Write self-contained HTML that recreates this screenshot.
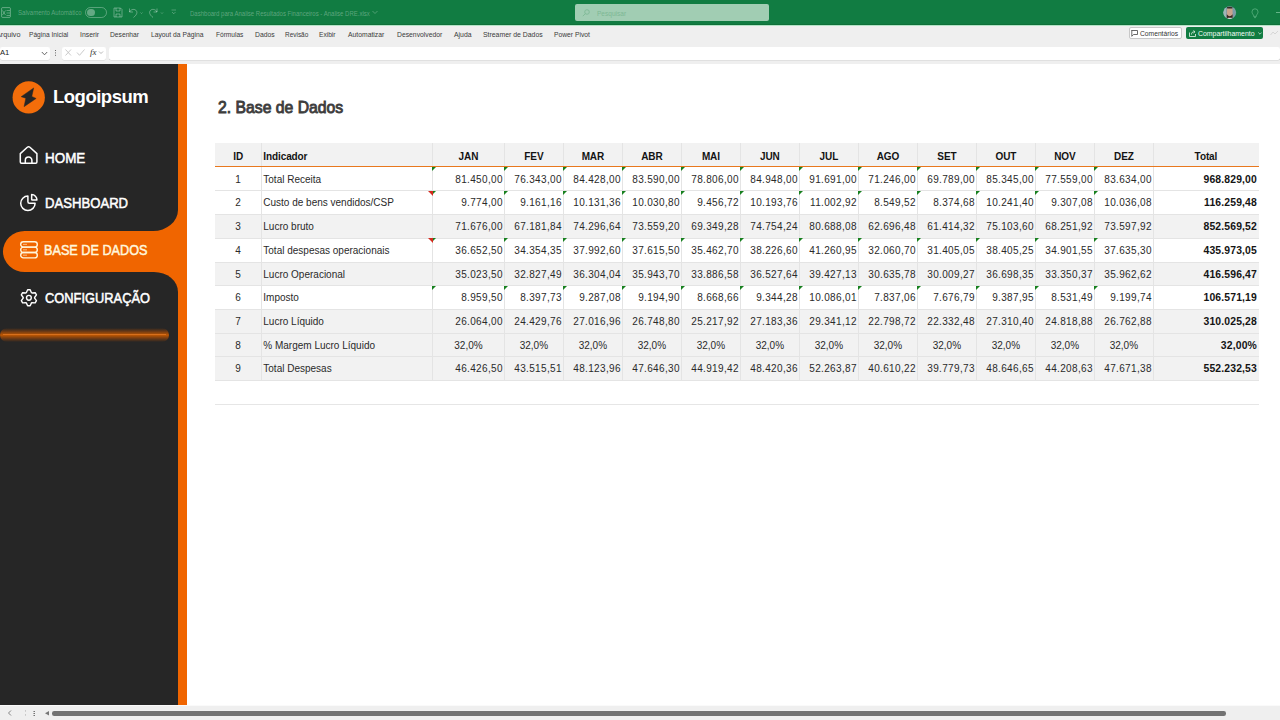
<!DOCTYPE html>
<html><head><meta charset="utf-8">
<style>
*{margin:0;padding:0;box-sizing:border-box}
html,body{width:1280px;height:720px;overflow:hidden;background:#fff;font-family:"Liberation Sans",sans-serif}
.abs{position:absolute}
#title{position:absolute;left:0;top:0;width:1280px;height:25px;background:#117c42}
#ribbon{position:absolute;left:0;top:25px;width:1280px;height:39px;background:#efefef}
.tab{position:absolute;top:29px;font-size:7.6px;color:#333;white-space:nowrap;letter-spacing:-0.1px}
.fbox{position:absolute;top:46.5px;height:13px;background:#fff;border-radius:2px;box-shadow:0 0.5px 0.5px rgba(0,0,0,0.12)}
.fade{position:absolute;color:rgba(255,255,255,0.33);white-space:nowrap}
#side{position:absolute;left:0;top:64px;width:178.3px;height:641px;background:#262626}
#stripe{position:absolute;left:178.3px;top:64px;width:8.7px;height:641px;background:#f06500}
.nav{position:absolute;left:45px;font-size:13.5px;font-weight:bold;color:#fff;white-space:nowrap;letter-spacing:-0.45px}
#bottom{position:absolute;left:0;top:705px;width:1280px;height:15px;background:#efefef;border-top:1px solid #fafafa}
.hdr{position:absolute;left:215px;width:1043.5px;background:#f2f2f2}
.gr{position:absolute;left:215px;width:1043.5px;background:#f2f2f2}
.hl{position:absolute;left:215px;width:1043.5px;height:1px;background:#e4e4e4}
.vl{position:absolute;width:1px;background:#e4e4e4}
.c,.l,.r{position:absolute;height:23.7px;line-height:25.5px;font-size:10px;color:#2a2a2a;white-space:nowrap}
.c{text-align:center}
.l{text-align:left;padding-left:2px}
.r{text-align:right;padding-right:1.5px;letter-spacing:0.35px}
.r.b{letter-spacing:0.15px;padding-right:1.5px;font-size:10.4px}
.b{font-weight:bold;color:#141414}
.h{line-height:27.6px;letter-spacing:-0.1px}
.gt{position:absolute;width:0;height:0;border-top:4.6px solid #17801f;border-right:4.6px solid transparent}
.rt{position:absolute;width:0;height:0;border-top:5px solid #d42a1e;border-left:5px solid transparent}
</style></head><body>
<div id="title"></div>
<!-- title bar items -->
<svg class="abs" style="left:1px;top:7px" width="10" height="11" viewBox="0 0 10 11">
<rect x="0.6" y="0.6" width="8.8" height="9.8" rx="1" fill="none" stroke="rgba(255,255,255,0.35)" stroke-width="1"/>
<path d="M1.5 3.5 L4.5 8 M4.5 3.5 L1.5 8 M5.5 3.5H9 M5.5 6H9 M5.5 8.5H9" stroke="rgba(255,255,255,0.35)" stroke-width="0.9"/>
</svg>
<div class="abs" style="left:85px;top:7px;width:22px;height:11px;border:1px solid rgba(255,255,255,0.3);border-radius:6px"></div>
<div class="abs" style="left:87px;top:8.5px;width:7.5px;height:7.5px;border-radius:50%;background:rgba(255,255,255,0.35)"></div>
<svg class="abs" style="left:113px;top:7px" width="10" height="11" viewBox="0 0 10 11">
<path d="M1 1H7.5L9 2.5V10H1Z M3 1V4H7V1 M3 10V7H7V10" fill="none" stroke="rgba(255,255,255,0.33)" stroke-width="1"/>
</svg>
<svg class="abs" style="left:128px;top:7px" width="40" height="12" viewBox="0 0 40 12">
<path d="M1.5 1.5V5H5 M1.5 5 C3 2 7 1.5 8.5 4 C9.5 6 8.5 8 5.5 10.5" fill="none" stroke="rgba(255,255,255,0.33)" stroke-width="1"/>
<path d="M12.5 5.5L13.5 6.5L14.5 5.5" fill="none" stroke="rgba(255,255,255,0.33)" stroke-width="0.8"/>
<path d="M29 1.5V5H25.5 M29 5 C27.5 2 23.5 1.5 22 4 C21 6 22 8 25 10.5" fill="none" stroke="rgba(255,255,255,0.33)" stroke-width="1"/>
<path d="M33 5.5L34 6.5L35 5.5" fill="none" stroke="rgba(255,255,255,0.33)" stroke-width="0.8"/>
</svg>
<svg class="abs" style="left:171px;top:9px" width="6" height="6" viewBox="0 0 6 6">
<path d="M0.5 1H5 M1 3L2.75 4.8L4.5 3" fill="none" stroke="rgba(255,255,255,0.33)" stroke-width="0.8"/>
</svg>
<svg class="abs" style="left:372px;top:10px" width="6" height="5" viewBox="0 0 6 5">
<path d="M0.5 1L3 3.5L5.5 1" fill="none" stroke="rgba(255,255,255,0.33)" stroke-width="0.8"/>
</svg>
<div class="abs" style="left:574.5px;top:4px;width:194.5px;height:16.6px;border-radius:2px;background:#a1cdb3"></div>
<svg class="abs" style="left:582px;top:8.5px" width="8" height="8" viewBox="0 0 8 8">
<circle cx="5" cy="3" r="2.3" fill="none" stroke="#7fb996" stroke-width="0.9"/><path d="M3.4 4.6L0.8 7.2" stroke="#7fb996" stroke-width="0.9"/>
</svg>
<!-- avatar -->
<svg class="abs" style="left:1223px;top:6px" width="14" height="14" viewBox="0 0 14 14">
<defs><clipPath id="av"><circle cx="6.7" cy="6.6" r="6.3"/></clipPath></defs>
<g clip-path="url(#av)">
<rect width="14" height="14" fill="#7d9aa6"/>
<rect x="0" y="0" width="3" height="14" fill="#9fb5b8"/>
<rect x="3.8" y="1.5" width="5.8" height="11" rx="2.5" fill="#c9a48c"/>
<rect x="3.8" y="0.6" width="5.8" height="2" rx="1" fill="#2e2a26"/>
<path d="M3.8 8.2 Q6.7 12.5 9.6 8.2 L9.6 12.5 H3.8Z" fill="#3a2620"/>
<rect x="4.8" y="11.8" width="4" height="2.5" fill="#dfe8df"/>
</g>
<circle cx="6.7" cy="6.6" r="6.1" fill="none" stroke="rgba(160,200,190,0.5)" stroke-width="0.5"/>
</svg>
<svg class="abs" style="left:1250.5px;top:7.5px" width="8" height="11" viewBox="0 0 8 11">
<path d="M2.6 7.2 C1.6 6 1 5 1 3.8 A3 3 0 0 1 7 3.8 C7 5 6.4 6 5.4 7.2 V8.4 H2.6 Z M3 9.6H5" fill="none" stroke="rgba(150,220,180,0.55)" stroke-width="0.8"/>
</svg>
<div class="abs" style="left:1276px;top:12.3px;width:4px;height:0.9px;background:rgba(170,225,195,0.55)"></div>

<div id="ribbon"></div>
<div class="abs" style="left:0;top:24px;width:1280px;height:1px;background:#0f7039"></div>
<div class="abs" style="left:0;top:25px;width:1280px;height:1.2px;background:#b3e3c6"></div>
<div class="abs" style="left:109px;top:59.2px;width:1171px;height:0.8px;background:#d6d6d6"></div>
<!-- ribbon tabs -->
<!-- share buttons -->
<div class="abs" style="left:1128.5px;top:27.2px;width:53px;height:12.2px;background:#fff;border:1px solid #c8c8c8;border-radius:2px"></div>
<svg class="abs" style="left:1130.5px;top:29.5px" width="7" height="7" viewBox="0 0 7 7">
<path d="M0.5 0.5H6.5V4.5H2.5L0.8 6.3V0.5Z" fill="none" stroke="#444" stroke-width="0.8"/>
</svg>
<div class="abs" style="left:1186px;top:27.2px;width:77px;height:12.2px;background:#117c42;border-radius:2px"></div>
<svg class="abs" style="left:1189px;top:29.5px" width="7" height="7" viewBox="0 0 7 7">
<path d="M0.5 2.5V6.5H6.5V4 M2.5 4.5C2.5 2.5 3.5 1.8 5.5 1.8 M4.5 0.5L6 1.8L4.5 3.1" fill="none" stroke="#e8f5ec" stroke-width="0.8"/>
</svg>
<svg class="abs" style="left:1257.5px;top:32px" width="4" height="3" viewBox="0 0 4 3">
<path d="M0.3 0.5L2 2.2L3.7 0.5" fill="none" stroke="#e8f5ec" stroke-width="0.7"/>
</svg>
<svg class="abs" style="left:1270px;top:30px" width="10" height="7" viewBox="0 0 10 7">
<path d="M0.5 5L3 2L5 4L8 1" fill="none" stroke="#cfcfcf" stroke-width="0.8"/>
</svg>

<!-- formula bar -->
<div class="fbox" style="left:0;width:50px"></div>
<div class="abs" style="left:0;top:48.2px;font-size:7.6px;color:#222">A1</div>
<svg class="abs" style="left:41px;top:50.5px" width="7" height="5" viewBox="0 0 7 5">
<path d="M0.8 1L3.5 3.8L6.2 1" fill="none" stroke="#555" stroke-width="0.9"/>
</svg>
<div class="abs" style="left:55px;top:49.5px;width:1.3px;height:1.3px;background:#666;box-shadow:0 2.4px 0 #666,0 4.8px 0 #666"></div>
<div class="fbox" style="left:62px;width:44px"></div>
<svg class="abs" style="left:64px;top:48px" width="40" height="10" viewBox="0 0 40 10">
<path d="M1.5 1.5L7 7.5 M7 1.5L1.5 7.5" stroke="#bdbdbd" stroke-width="0.8"/>
<path d="M13 4.5L15.5 7.3L20.5 1.5" fill="none" stroke="#bdbdbd" stroke-width="0.8"/>
<path d="M35 3.5L37 5.5L39 3.5" fill="none" stroke="#999" stroke-width="0.7"/>
</svg>
<div class="abs" style="left:90px;top:46.5px;font-size:9px;font-style:italic;font-family:'Liberation Serif',serif;color:#333">fx</div>
<div class="fbox" style="left:109px;width:1171px"></div>

<!-- sidebar -->
<div id="side"></div>
<div id="stripe"></div>
<div class="abs" style="left:140px;top:200px;width:47px;height:100px;background:#f06500"></div>
<div class="abs" style="left:0;top:64px;width:178.3px;height:166.5px;background:#262626;border-bottom-right-radius:25px 21px"></div>
<div class="abs" style="left:0;top:272px;width:178.3px;height:433px;background:#262626;border-top-right-radius:24px 20px"></div>
<div class="abs" style="left:3px;top:230.5px;width:184px;height:41.5px;background:#f06500;border-radius:22px 0 0 22px / 20.75px 0 0 20.75px"></div>
<div class="abs" style="left:0px;top:327.5px;width:169px;height:14px;border-radius:7px;background:linear-gradient(to bottom,rgba(150,65,10,0) 0%,rgba(160,72,8,0.6) 25%,rgba(200,90,0,0.95) 50%,rgba(160,72,8,0.6) 75%,rgba(150,65,10,0) 100%);filter:blur(0.6px)"></div>
<div class="abs" style="left:3px;top:333.8px;width:163px;height:1.2px;background:#d8701c;filter:blur(0.3px)"></div>

<!-- logo -->
<svg class="abs" style="left:8px;top:76px" width="44" height="42" viewBox="0 0 754 720">
<circle cx="355" cy="367" r="277" fill="#f36d0a"/>
<path d="M440 205 L408 350 L482 385 L275 525 L305 380 L225 355 Z" fill="#262626" stroke="#262626" stroke-width="8" stroke-linejoin="round"/>
</svg>
<div class="abs" style="left:53px;top:85.6px;font-size:18.5px;font-weight:bold;color:#fff;letter-spacing:-0.5px;white-space:nowrap">Logoipsum</div>

<!-- nav icons -->
<svg class="abs" style="left:19px;top:145px" width="20" height="20" viewBox="0 0 20 20">
<path d="M1.3 8.6 L8.3 2.3 Q9.6 1.2 10.9 2.3 L17.9 8.6 V17 Q17.9 18.2 16.7 18.2 H2.5 Q1.3 18.2 1.3 17 Z" fill="none" stroke="#fff" stroke-width="1.5" stroke-linejoin="round"/>
<path d="M6.3 18.2 V15.4 A3.3 3.3 0 0 1 12.9 15.4 V18.2" fill="none" stroke="#fff" stroke-width="1.5"/>
</svg>
<svg class="abs" style="left:19px;top:193px" width="20" height="20" viewBox="0 0 20 20">
<path d="M8.9 3.1 A7.2 7.2 0 1 0 16.1 10.3 H10.4 Q8.9 10.3 8.9 8.8 Z" fill="none" stroke="#fff" stroke-width="1.5" stroke-linejoin="round"/>
<path d="M12.65 1.6 A5.4 5.4 0 0 1 17.95 7.05 H13.4 Q12.65 7.05 12.65 6.3 Z" fill="none" stroke="#fff" stroke-width="1.5" stroke-linejoin="round"/>
</svg>
<svg class="abs" style="left:19px;top:240px" width="20" height="20" viewBox="0 0 20 20">
<g fill="none" stroke="#fff6dc" stroke-width="1.4">
<rect x="1.7" y="1.7" width="16.6" height="5.4" rx="2.7"/>
<rect x="1.7" y="7.1" width="16.6" height="5.4" rx="2.7"/>
<rect x="1.7" y="12.5" width="16.6" height="5.4" rx="2.7"/>
</g>
<g fill="#fff6dc"><rect x="4.5" y="3.8" width="1" height="1.2"/><rect x="6.5" y="3.8" width="1" height="1.2"/><rect x="4.5" y="9.2" width="1" height="1.2"/><rect x="6.5" y="9.2" width="1" height="1.2"/><rect x="4.5" y="14.6" width="1" height="1.2"/><rect x="6.5" y="14.6" width="1" height="1.2"/></g>
</svg>
<svg class="abs" style="left:19px;top:288px" width="20" height="20" viewBox="0 0 20 20">
<path d="M7.31 4.72 L8.63 1.80 L11.17 1.80 L12.49 4.72 L13.00 5.02 L16.19 4.70 L17.46 6.90 L15.59 9.50 L15.59 10.10 L17.46 12.70 L16.19 14.90 L13.00 14.58 L12.49 14.88 L11.17 17.80 L8.63 17.80 L7.31 14.88 L6.80 14.58 L3.61 14.90 L2.34 12.70 L4.21 10.10 L4.21 9.50 L2.34 6.90 L3.61 4.70 L6.80 5.02 Z" fill="none" stroke="#fff" stroke-width="1.4" stroke-linejoin="round"/>
<circle cx="9.9" cy="9.8" r="2.4" fill="none" stroke="#fff" stroke-width="1.4"/>
</svg>


<div class="hdr" style="top:143px;height:23.7px"></div>
<div class="gr" style="top:214.1px;height:23.7px"></div>
<div class="gr" style="top:261.5px;height:23.7px"></div>
<div class="gr" style="top:308.9px;height:23.7px"></div>
<div class="gr" style="top:332.6px;height:23.7px"></div>
<div class="gr" style="top:356.3px;height:23.7px"></div>
<div class="hl" style="top:190.4px"></div>
<div class="hl" style="top:214.1px"></div>
<div class="hl" style="top:237.8px"></div>
<div class="hl" style="top:261.5px"></div>
<div class="hl" style="top:285.2px"></div>
<div class="hl" style="top:308.9px"></div>
<div class="hl" style="top:332.6px"></div>
<div class="hl" style="top:356.3px"></div>
<div class="hl" style="top:380px"></div>
<div class="vl" style="left:261px;top:143px;height:237px"></div>
<div class="vl" style="left:432px;top:143px;height:237px"></div>
<div class="vl" style="left:504px;top:143px;height:237px"></div>
<div class="vl" style="left:563px;top:143px;height:237px"></div>
<div class="vl" style="left:622px;top:143px;height:237px"></div>
<div class="vl" style="left:681px;top:143px;height:237px"></div>
<div class="vl" style="left:740px;top:143px;height:237px"></div>
<div class="vl" style="left:799px;top:143px;height:237px"></div>
<div class="vl" style="left:858px;top:143px;height:237px"></div>
<div class="vl" style="left:917px;top:143px;height:237px"></div>
<div class="vl" style="left:976px;top:143px;height:237px"></div>
<div class="vl" style="left:1035px;top:143px;height:237px"></div>
<div class="vl" style="left:1094px;top:143px;height:237px"></div>
<div class="vl" style="left:1153px;top:143px;height:237px"></div>
<div class="c b h" style="left:215px;width:46.3px;top:143px">ID</div>
<div class="l b h" style="left:261.3px;width:171.2px;top:143px">Indicador</div>
<div class="c b h" style="left:432.5px;width:71.9px;top:143px">JAN</div>
<div class="c b h" style="left:504.4px;width:59px;top:143px">FEV</div>
<div class="c b h" style="left:563.4px;width:59px;top:143px">MAR</div>
<div class="c b h" style="left:622.4px;width:59px;top:143px">ABR</div>
<div class="c b h" style="left:681.4px;width:59px;top:143px">MAI</div>
<div class="c b h" style="left:740.4px;width:59px;top:143px">JUN</div>
<div class="c b h" style="left:799.4px;width:59px;top:143px">JUL</div>
<div class="c b h" style="left:858.4px;width:59px;top:143px">AGO</div>
<div class="c b h" style="left:917.4px;width:59px;top:143px">SET</div>
<div class="c b h" style="left:976.4px;width:59px;top:143px">OUT</div>
<div class="c b h" style="left:1035.4px;width:59px;top:143px">NOV</div>
<div class="c b h" style="left:1094.4px;width:59px;top:143px">DEZ</div>
<div class="c b h" style="left:1153.4px;width:105.1px;top:143px">Total</div>
<div class="c" style="left:215px;width:46.3px;top:166.7px">1</div>
<div class="l" style="left:261.3px;width:171.2px;top:166.7px">Total Receita</div>
<div class="r" style="left:432.5px;width:71.9px;top:166.7px">81.450,00</div>
<div class="r" style="left:504.4px;width:59px;top:166.7px">76.343,00</div>
<div class="r" style="left:563.4px;width:59px;top:166.7px">84.428,00</div>
<div class="r" style="left:622.4px;width:59px;top:166.7px">83.590,00</div>
<div class="r" style="left:681.4px;width:59px;top:166.7px">78.806,00</div>
<div class="r" style="left:740.4px;width:59px;top:166.7px">84.948,00</div>
<div class="r" style="left:799.4px;width:59px;top:166.7px">91.691,00</div>
<div class="r" style="left:858.4px;width:59px;top:166.7px">71.246,00</div>
<div class="r" style="left:917.4px;width:59px;top:166.7px">69.789,00</div>
<div class="r" style="left:976.4px;width:59px;top:166.7px">85.345,00</div>
<div class="r" style="left:1035.4px;width:59px;top:166.7px">77.559,00</div>
<div class="r" style="left:1094.4px;width:59px;top:166.7px">83.634,00</div>
<div class="r b" style="left:1153.4px;width:105.1px;top:166.7px">968.829,00</div>
<div class="gt" style="left:432.2px;top:167.3px"></div>
<div class="gt" style="left:504.1px;top:167.3px"></div>
<div class="gt" style="left:563.1px;top:167.3px"></div>
<div class="gt" style="left:622.1px;top:167.3px"></div>
<div class="gt" style="left:681.1px;top:167.3px"></div>
<div class="gt" style="left:740.1px;top:167.3px"></div>
<div class="gt" style="left:799.1px;top:167.3px"></div>
<div class="gt" style="left:858.1px;top:167.3px"></div>
<div class="gt" style="left:917.1px;top:167.3px"></div>
<div class="gt" style="left:976.1px;top:167.3px"></div>
<div class="gt" style="left:1035.1px;top:167.3px"></div>
<div class="gt" style="left:1094.1px;top:167.3px"></div>
<div class="c" style="left:215px;width:46.3px;top:190.4px">2</div>
<div class="l" style="left:261.3px;width:171.2px;top:190.4px">Custo de bens vendidos/CSP</div>
<div class="r" style="left:432.5px;width:71.9px;top:190.4px">9.774,00</div>
<div class="r" style="left:504.4px;width:59px;top:190.4px">9.161,16</div>
<div class="r" style="left:563.4px;width:59px;top:190.4px">10.131,36</div>
<div class="r" style="left:622.4px;width:59px;top:190.4px">10.030,80</div>
<div class="r" style="left:681.4px;width:59px;top:190.4px">9.456,72</div>
<div class="r" style="left:740.4px;width:59px;top:190.4px">10.193,76</div>
<div class="r" style="left:799.4px;width:59px;top:190.4px">11.002,92</div>
<div class="r" style="left:858.4px;width:59px;top:190.4px">8.549,52</div>
<div class="r" style="left:917.4px;width:59px;top:190.4px">8.374,68</div>
<div class="r" style="left:976.4px;width:59px;top:190.4px">10.241,40</div>
<div class="r" style="left:1035.4px;width:59px;top:190.4px">9.307,08</div>
<div class="r" style="left:1094.4px;width:59px;top:190.4px">10.036,08</div>
<div class="r b" style="left:1153.4px;width:105.1px;top:190.4px">116.259,48</div>
<div class="gt" style="left:432.2px;top:191px"></div>
<div class="gt" style="left:504.1px;top:191px"></div>
<div class="gt" style="left:563.1px;top:191px"></div>
<div class="gt" style="left:622.1px;top:191px"></div>
<div class="gt" style="left:681.1px;top:191px"></div>
<div class="gt" style="left:740.1px;top:191px"></div>
<div class="gt" style="left:799.1px;top:191px"></div>
<div class="gt" style="left:858.1px;top:191px"></div>
<div class="gt" style="left:917.1px;top:191px"></div>
<div class="gt" style="left:976.1px;top:191px"></div>
<div class="gt" style="left:1035.1px;top:191px"></div>
<div class="gt" style="left:1094.1px;top:191px"></div>
<div class="rt" style="left:427.5px;top:190.9px"></div>
<div class="c" style="left:215px;width:46.3px;top:214.1px">3</div>
<div class="l" style="left:261.3px;width:171.2px;top:214.1px">Lucro bruto</div>
<div class="r" style="left:432.5px;width:71.9px;top:214.1px">71.676,00</div>
<div class="r" style="left:504.4px;width:59px;top:214.1px">67.181,84</div>
<div class="r" style="left:563.4px;width:59px;top:214.1px">74.296,64</div>
<div class="r" style="left:622.4px;width:59px;top:214.1px">73.559,20</div>
<div class="r" style="left:681.4px;width:59px;top:214.1px">69.349,28</div>
<div class="r" style="left:740.4px;width:59px;top:214.1px">74.754,24</div>
<div class="r" style="left:799.4px;width:59px;top:214.1px">80.688,08</div>
<div class="r" style="left:858.4px;width:59px;top:214.1px">62.696,48</div>
<div class="r" style="left:917.4px;width:59px;top:214.1px">61.414,32</div>
<div class="r" style="left:976.4px;width:59px;top:214.1px">75.103,60</div>
<div class="r" style="left:1035.4px;width:59px;top:214.1px">68.251,92</div>
<div class="r" style="left:1094.4px;width:59px;top:214.1px">73.597,92</div>
<div class="r b" style="left:1153.4px;width:105.1px;top:214.1px">852.569,52</div>
<div class="c" style="left:215px;width:46.3px;top:237.8px">4</div>
<div class="l" style="left:261.3px;width:171.2px;top:237.8px">Total despesas operacionais</div>
<div class="r" style="left:432.5px;width:71.9px;top:237.8px">36.652,50</div>
<div class="r" style="left:504.4px;width:59px;top:237.8px">34.354,35</div>
<div class="r" style="left:563.4px;width:59px;top:237.8px">37.992,60</div>
<div class="r" style="left:622.4px;width:59px;top:237.8px">37.615,50</div>
<div class="r" style="left:681.4px;width:59px;top:237.8px">35.462,70</div>
<div class="r" style="left:740.4px;width:59px;top:237.8px">38.226,60</div>
<div class="r" style="left:799.4px;width:59px;top:237.8px">41.260,95</div>
<div class="r" style="left:858.4px;width:59px;top:237.8px">32.060,70</div>
<div class="r" style="left:917.4px;width:59px;top:237.8px">31.405,05</div>
<div class="r" style="left:976.4px;width:59px;top:237.8px">38.405,25</div>
<div class="r" style="left:1035.4px;width:59px;top:237.8px">34.901,55</div>
<div class="r" style="left:1094.4px;width:59px;top:237.8px">37.635,30</div>
<div class="r b" style="left:1153.4px;width:105.1px;top:237.8px">435.973,05</div>
<div class="gt" style="left:432.2px;top:238.4px"></div>
<div class="gt" style="left:504.1px;top:238.4px"></div>
<div class="gt" style="left:563.1px;top:238.4px"></div>
<div class="gt" style="left:622.1px;top:238.4px"></div>
<div class="gt" style="left:681.1px;top:238.4px"></div>
<div class="gt" style="left:740.1px;top:238.4px"></div>
<div class="gt" style="left:799.1px;top:238.4px"></div>
<div class="gt" style="left:858.1px;top:238.4px"></div>
<div class="gt" style="left:917.1px;top:238.4px"></div>
<div class="gt" style="left:976.1px;top:238.4px"></div>
<div class="gt" style="left:1035.1px;top:238.4px"></div>
<div class="gt" style="left:1094.1px;top:238.4px"></div>
<div class="rt" style="left:427.5px;top:238.3px"></div>
<div class="c" style="left:215px;width:46.3px;top:261.5px">5</div>
<div class="l" style="left:261.3px;width:171.2px;top:261.5px">Lucro Operacional</div>
<div class="r" style="left:432.5px;width:71.9px;top:261.5px">35.023,50</div>
<div class="r" style="left:504.4px;width:59px;top:261.5px">32.827,49</div>
<div class="r" style="left:563.4px;width:59px;top:261.5px">36.304,04</div>
<div class="r" style="left:622.4px;width:59px;top:261.5px">35.943,70</div>
<div class="r" style="left:681.4px;width:59px;top:261.5px">33.886,58</div>
<div class="r" style="left:740.4px;width:59px;top:261.5px">36.527,64</div>
<div class="r" style="left:799.4px;width:59px;top:261.5px">39.427,13</div>
<div class="r" style="left:858.4px;width:59px;top:261.5px">30.635,78</div>
<div class="r" style="left:917.4px;width:59px;top:261.5px">30.009,27</div>
<div class="r" style="left:976.4px;width:59px;top:261.5px">36.698,35</div>
<div class="r" style="left:1035.4px;width:59px;top:261.5px">33.350,37</div>
<div class="r" style="left:1094.4px;width:59px;top:261.5px">35.962,62</div>
<div class="r b" style="left:1153.4px;width:105.1px;top:261.5px">416.596,47</div>
<div class="c" style="left:215px;width:46.3px;top:285.2px">6</div>
<div class="l" style="left:261.3px;width:171.2px;top:285.2px">Imposto</div>
<div class="r" style="left:432.5px;width:71.9px;top:285.2px">8.959,50</div>
<div class="r" style="left:504.4px;width:59px;top:285.2px">8.397,73</div>
<div class="r" style="left:563.4px;width:59px;top:285.2px">9.287,08</div>
<div class="r" style="left:622.4px;width:59px;top:285.2px">9.194,90</div>
<div class="r" style="left:681.4px;width:59px;top:285.2px">8.668,66</div>
<div class="r" style="left:740.4px;width:59px;top:285.2px">9.344,28</div>
<div class="r" style="left:799.4px;width:59px;top:285.2px">10.086,01</div>
<div class="r" style="left:858.4px;width:59px;top:285.2px">7.837,06</div>
<div class="r" style="left:917.4px;width:59px;top:285.2px">7.676,79</div>
<div class="r" style="left:976.4px;width:59px;top:285.2px">9.387,95</div>
<div class="r" style="left:1035.4px;width:59px;top:285.2px">8.531,49</div>
<div class="r" style="left:1094.4px;width:59px;top:285.2px">9.199,74</div>
<div class="r b" style="left:1153.4px;width:105.1px;top:285.2px">106.571,19</div>
<div class="gt" style="left:432.2px;top:285.8px"></div>
<div class="gt" style="left:504.1px;top:285.8px"></div>
<div class="gt" style="left:563.1px;top:285.8px"></div>
<div class="gt" style="left:622.1px;top:285.8px"></div>
<div class="gt" style="left:681.1px;top:285.8px"></div>
<div class="gt" style="left:740.1px;top:285.8px"></div>
<div class="gt" style="left:799.1px;top:285.8px"></div>
<div class="gt" style="left:858.1px;top:285.8px"></div>
<div class="gt" style="left:917.1px;top:285.8px"></div>
<div class="gt" style="left:976.1px;top:285.8px"></div>
<div class="gt" style="left:1035.1px;top:285.8px"></div>
<div class="gt" style="left:1094.1px;top:285.8px"></div>
<div class="c" style="left:215px;width:46.3px;top:308.9px">7</div>
<div class="l" style="left:261.3px;width:171.2px;top:308.9px">Lucro Líquido</div>
<div class="r" style="left:432.5px;width:71.9px;top:308.9px">26.064,00</div>
<div class="r" style="left:504.4px;width:59px;top:308.9px">24.429,76</div>
<div class="r" style="left:563.4px;width:59px;top:308.9px">27.016,96</div>
<div class="r" style="left:622.4px;width:59px;top:308.9px">26.748,80</div>
<div class="r" style="left:681.4px;width:59px;top:308.9px">25.217,92</div>
<div class="r" style="left:740.4px;width:59px;top:308.9px">27.183,36</div>
<div class="r" style="left:799.4px;width:59px;top:308.9px">29.341,12</div>
<div class="r" style="left:858.4px;width:59px;top:308.9px">22.798,72</div>
<div class="r" style="left:917.4px;width:59px;top:308.9px">22.332,48</div>
<div class="r" style="left:976.4px;width:59px;top:308.9px">27.310,40</div>
<div class="r" style="left:1035.4px;width:59px;top:308.9px">24.818,88</div>
<div class="r" style="left:1094.4px;width:59px;top:308.9px">26.762,88</div>
<div class="r b" style="left:1153.4px;width:105.1px;top:308.9px">310.025,28</div>
<div class="c" style="left:215px;width:46.3px;top:332.6px">8</div>
<div class="l" style="left:261.3px;width:171.2px;top:332.6px">% Margem Lucro Líquido</div>
<div class="c" style="left:432.5px;width:71.9px;top:332.6px">32,0%</div>
<div class="c" style="left:504.4px;width:59px;top:332.6px">32,0%</div>
<div class="c" style="left:563.4px;width:59px;top:332.6px">32,0%</div>
<div class="c" style="left:622.4px;width:59px;top:332.6px">32,0%</div>
<div class="c" style="left:681.4px;width:59px;top:332.6px">32,0%</div>
<div class="c" style="left:740.4px;width:59px;top:332.6px">32,0%</div>
<div class="c" style="left:799.4px;width:59px;top:332.6px">32,0%</div>
<div class="c" style="left:858.4px;width:59px;top:332.6px">32,0%</div>
<div class="c" style="left:917.4px;width:59px;top:332.6px">32,0%</div>
<div class="c" style="left:976.4px;width:59px;top:332.6px">32,0%</div>
<div class="c" style="left:1035.4px;width:59px;top:332.6px">32,0%</div>
<div class="c" style="left:1094.4px;width:59px;top:332.6px">32,0%</div>
<div class="r b" style="left:1153.4px;width:105.1px;top:332.6px">32,00%</div>
<div class="c" style="left:215px;width:46.3px;top:356.3px">9</div>
<div class="l" style="left:261.3px;width:171.2px;top:356.3px">Total Despesas</div>
<div class="r" style="left:432.5px;width:71.9px;top:356.3px">46.426,50</div>
<div class="r" style="left:504.4px;width:59px;top:356.3px">43.515,51</div>
<div class="r" style="left:563.4px;width:59px;top:356.3px">48.123,96</div>
<div class="r" style="left:622.4px;width:59px;top:356.3px">47.646,30</div>
<div class="r" style="left:681.4px;width:59px;top:356.3px">44.919,42</div>
<div class="r" style="left:740.4px;width:59px;top:356.3px">48.420,36</div>
<div class="r" style="left:799.4px;width:59px;top:356.3px">52.263,87</div>
<div class="r" style="left:858.4px;width:59px;top:356.3px">40.610,22</div>
<div class="r" style="left:917.4px;width:59px;top:356.3px">39.779,73</div>
<div class="r" style="left:976.4px;width:59px;top:356.3px">48.646,65</div>
<div class="r" style="left:1035.4px;width:59px;top:356.3px">44.208,63</div>
<div class="r" style="left:1094.4px;width:59px;top:356.3px">47.671,38</div>
<div class="r b" style="left:1153.4px;width:105.1px;top:356.3px">552.232,53</div>
<div class="abs" style="left:215px;top:165.5px;width:1043.5px;height:1px;background:#e8781e"></div>
<div class="abs" style="left:215px;top:404px;width:1043.5px;height:1px;background:#e6e6e6"></div>

<div id="bottom"></div>
<svg class="abs" style="left:6px;top:709px" width="50" height="9" viewBox="0 0 50 9">
<path d="M5 1.5L2.5 4L5 6.5" fill="none" stroke="#777" stroke-width="0.9"/>
<g fill="#999"><rect x="19" y="1.5" width="0.9" height="0.9"/><rect x="19" y="5.5" width="0.9" height="0.9"/></g>
<g fill="#666"><rect x="27.5" y="2" width="1.4" height="1"/><rect x="27.5" y="4" width="1.4" height="1"/><rect x="27.5" y="6" width="1.4" height="1"/></g>
<path d="M39 4.3L43 2.1V6.5Z" fill="#777"/>
</svg>
<div class="abs" style="left:52px;top:711.3px;width:1174px;height:4.4px;border-radius:2.2px;background:#727272"></div>
<svg class="abs" style="left:-4.20px;top:29.30px;overflow:visible" width="26.50" height="10.01"><text x="0" y="7.70" font-size="7.70" fill="#3a3a3a" font-weight="normal" textLength="24.50" lengthAdjust="spacingAndGlyphs">Arquivo</text></svg>
<svg class="abs" style="left:28.75px;top:29.30px;overflow:visible" width="41.35" height="10.01"><text x="0" y="7.70" font-size="7.70" fill="#3a3a3a" font-weight="normal" textLength="39.35" lengthAdjust="spacingAndGlyphs">Página Inicial</text></svg>
<svg class="abs" style="left:79.70px;top:29.30px;overflow:visible" width="21.05" height="10.01"><text x="0" y="7.70" font-size="7.70" fill="#3a3a3a" font-weight="normal" textLength="19.05" lengthAdjust="spacingAndGlyphs">Inserir</text></svg>
<svg class="abs" style="left:109.70px;top:29.30px;overflow:visible" width="31.05" height="10.01"><text x="0" y="7.70" font-size="7.70" fill="#3a3a3a" font-weight="normal" textLength="29.05" lengthAdjust="spacingAndGlyphs">Desenhar</text></svg>
<svg class="abs" style="left:150.60px;top:29.30px;overflow:visible" width="54.40" height="10.01"><text x="0" y="7.70" font-size="7.70" fill="#3a3a3a" font-weight="normal" textLength="52.40" lengthAdjust="spacingAndGlyphs">Layout da Página</text></svg>
<svg class="abs" style="left:215.60px;top:29.30px;overflow:visible" width="29.40" height="10.01"><text x="0" y="7.70" font-size="7.70" fill="#3a3a3a" font-weight="normal" textLength="27.40" lengthAdjust="spacingAndGlyphs">Fórmulas</text></svg>
<svg class="abs" style="left:254.70px;top:29.30px;overflow:visible" width="21.70" height="10.01"><text x="0" y="7.70" font-size="7.70" fill="#3a3a3a" font-weight="normal" textLength="19.70" lengthAdjust="spacingAndGlyphs">Dados</text></svg>
<svg class="abs" style="left:284.70px;top:29.30px;overflow:visible" width="25.30" height="10.01"><text x="0" y="7.70" font-size="7.70" fill="#3a3a3a" font-weight="normal" textLength="23.30" lengthAdjust="spacingAndGlyphs">Revisão</text></svg>
<svg class="abs" style="left:318.75px;top:29.30px;overflow:visible" width="18.55" height="10.01"><text x="0" y="7.70" font-size="7.70" fill="#3a3a3a" font-weight="normal" textLength="16.55" lengthAdjust="spacingAndGlyphs">Exibir</text></svg>
<svg class="abs" style="left:347.50px;top:29.30px;overflow:visible" width="38.25" height="10.01"><text x="0" y="7.70" font-size="7.70" fill="#3a3a3a" font-weight="normal" textLength="36.25" lengthAdjust="spacingAndGlyphs">Automatizar</text></svg>
<svg class="abs" style="left:396.60px;top:29.30px;overflow:visible" width="47.30" height="10.01"><text x="0" y="7.70" font-size="7.70" fill="#3a3a3a" font-weight="normal" textLength="45.30" lengthAdjust="spacingAndGlyphs">Desenvolvedor</text></svg>
<svg class="abs" style="left:453.75px;top:29.30px;overflow:visible" width="19.50" height="10.01"><text x="0" y="7.70" font-size="7.70" fill="#3a3a3a" font-weight="normal" textLength="17.50" lengthAdjust="spacingAndGlyphs">Ajuda</text></svg>
<svg class="abs" style="left:482.50px;top:29.30px;overflow:visible" width="61.70" height="10.01"><text x="0" y="7.70" font-size="7.70" fill="#3a3a3a" font-weight="normal" textLength="59.70" lengthAdjust="spacingAndGlyphs">Streamer de Dados</text></svg>
<svg class="abs" style="left:553.75px;top:29.30px;overflow:visible" width="37.95" height="10.01"><text x="0" y="7.70" font-size="7.70" fill="#3a3a3a" font-weight="normal" textLength="35.95" lengthAdjust="spacingAndGlyphs">Power Pivot</text></svg>
<svg class="abs" style="left:17.70px;top:8.30px;overflow:visible" width="65.60" height="8.84"><text x="0" y="6.80" font-size="6.80" fill="rgba(255,255,255,0.33)" font-weight="normal" textLength="63.60" lengthAdjust="spacingAndGlyphs">Salvamento Automático</text></svg>
<svg class="abs" style="left:189.70px;top:8.80px;overflow:visible" width="181.80" height="8.84"><text x="0" y="6.80" font-size="6.80" fill="rgba(255,255,255,0.33)" font-weight="normal" textLength="179.80" lengthAdjust="spacingAndGlyphs">Dashboard para Analise Resultados Financeiros - Analise DRE.xlsx</text></svg>
<svg class="abs" style="left:596.60px;top:9.00px;overflow:visible" width="31.10" height="9.10"><text x="0" y="7.00" font-size="7.00" fill="#7db893" font-weight="normal" textLength="29.10" lengthAdjust="spacingAndGlyphs">Pesquisar</text></svg>
<svg class="abs" style="left:1140.00px;top:29.00px;overflow:visible" width="40.00" height="9.10"><text x="0" y="7.00" font-size="7.00" fill="#333" font-weight="normal" textLength="38.00" lengthAdjust="spacingAndGlyphs">Comentários</text></svg>
<svg class="abs" style="left:1197.50px;top:29.00px;overflow:visible" width="58.50" height="9.10"><text x="0" y="7.00" font-size="7.00" fill="#f4fbf6" font-weight="normal" textLength="56.50" lengthAdjust="spacingAndGlyphs">Compartilhamento</text></svg>
<svg class="abs" style="left:44.90px;top:148.80px;overflow:visible" width="42.30" height="18.46"><text x="0" y="14.20" font-size="14.20" fill="#fff" font-weight="normal" textLength="40.30" lengthAdjust="spacingAndGlyphs" stroke="#fff" stroke-width="0.5">HOME</text></svg>
<svg class="abs" style="left:44.80px;top:193.80px;overflow:visible" width="85.10" height="18.46"><text x="0" y="14.20" font-size="14.20" fill="#fff" font-weight="normal" textLength="83.10" lengthAdjust="spacingAndGlyphs" stroke="#fff" stroke-width="0.5">DASHBOARD</text></svg>
<svg class="abs" style="left:44.40px;top:240.80px;overflow:visible" width="105.50" height="18.46"><text x="0" y="14.20" font-size="14.20" fill="#fff6dc" font-weight="normal" textLength="103.50" lengthAdjust="spacingAndGlyphs" stroke="#fff6dc" stroke-width="0.5">BASE DE DADOS</text></svg>
<svg class="abs" style="left:44.50px;top:288.60px;overflow:visible" width="107.00" height="18.46"><text x="0" y="14.20" font-size="14.20" fill="#fff" font-weight="normal" textLength="105.00" lengthAdjust="spacingAndGlyphs" stroke="#fff" stroke-width="0.5">CONFIGURAÇÃO</text></svg>
<svg class="abs" style="left:218.00px;top:96.60px;overflow:visible" width="127.20" height="21.32"><text x="0" y="16.40" font-size="16.40" fill="#3d3d3d" font-weight="normal" textLength="125.20" lengthAdjust="spacingAndGlyphs" stroke="#3d3d3d" stroke-width="0.9">2. Base de Dados</text></svg>
</body></html>
